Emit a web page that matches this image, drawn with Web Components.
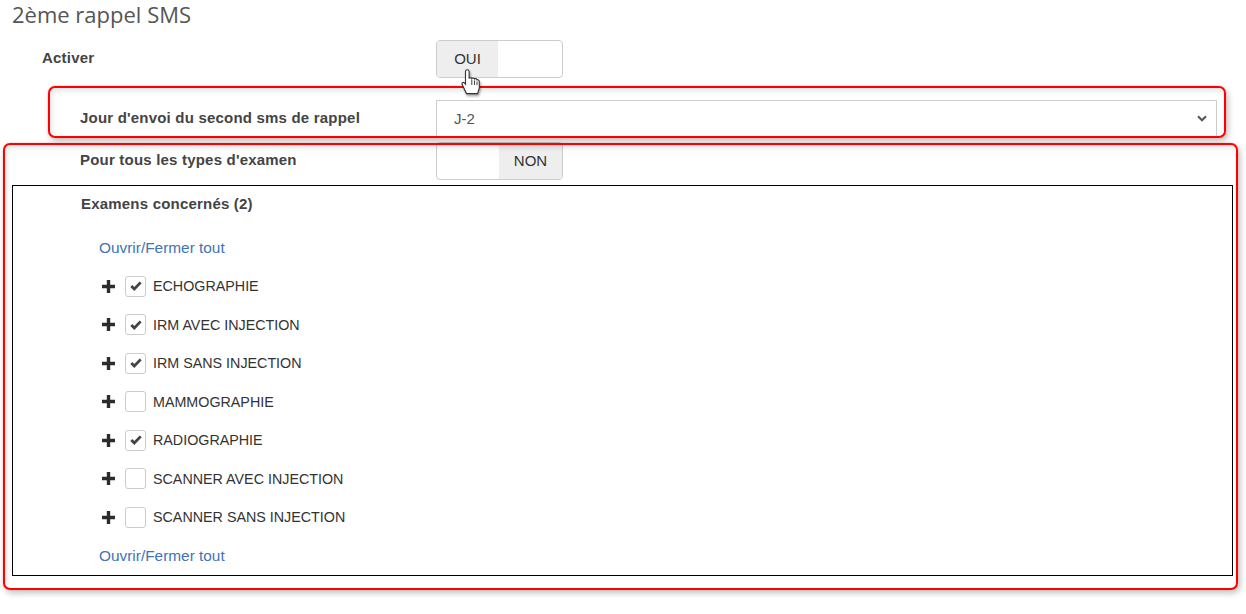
<!DOCTYPE html>
<html>
<head>
<meta charset="utf-8">
<title>2ème rappel SMS</title>
<style>
  html, body { margin: 0; padding: 0; background: #fff; }
  body { font-family: "Liberation Sans", Arial, sans-serif; color: #333; }
</style>
</head>
<body>
<template id="settings-row-tpl">
  <style>
    :host { display: flex; align-items: flex-start; height: var(--row-height, 38px); }
    .label {
      box-sizing: border-box;
      width: 436px;
      padding-left: var(--label-left, 80px);
      padding-top: var(--label-top, 9px);
      font: bold 15px/17px "Liberation Sans", Arial, sans-serif;
      letter-spacing: .2px;
      color: #444;
    }
    .control { flex: none; }
  </style>
  <div class="label"><slot name="label"></slot></div>
  <div class="control"><slot></slot></div>
</template>

<template id="on-off-tpl">
  <style>
    :host { display: block; width: 127px; height: 38px; }
    .box {
      box-sizing: border-box;
      display: flex;
      height: 100%;
      border: 1px solid #ccc;
      border-radius: 4px;
      overflow: hidden;
      font: 15px/36px "Liberation Sans", Arial, sans-serif;
      color: #333;
    }
    .on { justify-content: flex-start; }
    .off { justify-content: flex-end; }
    .state { width: 61px; background: #eee; text-align: center; }
    .off .state { width: 63px; }
  </style>
  <div class="box"><span class="state"></span></div>
</template>

<template id="day-select-tpl">
  <style>
    :host { display: block; width: 781px; height: 38px; }
    .box {
      box-sizing: border-box;
      height: 100%;
      display: flex;
      align-items: center;
      justify-content: space-between;
      padding: 0 9px 2px 17px;
      border: 1px solid #ccc;
      font: 15px "Liberation Sans", Arial, sans-serif;
      color: #555;
    }
    svg { display: block; }
  </style>
  <div class="box">
    <slot></slot>
    <svg width="10" height="7" viewBox="0 0 10 7"><path d="M1 1.300l4 4 4-4" fill="none" stroke="#555" stroke-width="2"/></svg>
  </div>
</template>

<template id="exam-item-tpl">
  <style>
    :host { display: flex; align-items: center; height: 38.5px; font: 14.3px "Liberation Sans", Arial, sans-serif; color: #333; }
    .plus { width: 13px; height: 13px; margin-right: 10px; flex: none; }
    .check {
      box-sizing: border-box;
      width: 21px; height: 21px;
      margin-right: 7px;
      border: 1px solid #ccc;
      border-radius: 3px;
      display: flex; align-items: center; justify-content: center;
      flex: none;
    }
    svg { display: block; }
    .mark { visibility: hidden; }
    :host([checked]) .mark { visibility: visible; }
  </style>
  <svg class="plus" viewBox="0 0 13 13"><path d="M4.800 0h3.400v4.800H13v3.400H8.200V13H4.800V8.200H0V4.800h4.800z" fill="#2c2c2c"/></svg>
  <span class="check">
    <svg class="mark" width="12" height="10" viewBox="0 0 12 10"><path d="M1.300 5l3 3 6.400-6.600" fill="none" stroke="#444" stroke-width="2.800"/></svg>
  </span>
  <slot></slot>
</template>

<template id="exam-box-tpl">
  <style>
    :host {
      display: block;
      box-sizing: border-box;
      margin-left: 12px;
      width: 1221px;
      height: 391px;
      border: 1px solid #000;
    }
    h3 {
      margin: 0;
      padding: 9px 0 0 68px;
      font: bold 15px/17px "Liberation Sans", Arial, sans-serif;
      letter-spacing: .2px;
      color: #444;
    }
    .toggle-all {
      display: block;
      padding-left: 86px;
      font: 15.4px/17px "Liberation Sans", Arial, sans-serif;
      color: #3f74b8;
      text-decoration: none;
    }
    .top { margin-top: 27px; margin-bottom: 11px; }
    .bottom { margin-top: 10px; }
    .items { padding-left: 89px; }
  </style>
  <h3><slot name="title"></slot></h3>
  <a class="toggle-all top" href="#">Ouvrir/Fermer tout</a>
  <div class="items"><slot></slot></div>
  <a class="toggle-all bottom" href="#">Ouvrir/Fermer tout</a>
</template>

<template id="red-frame-tpl">
  <style>
    :host {
      position: absolute;
      box-sizing: border-box;
      border: 2px solid #f00;
      border-radius: 7px;
      box-shadow: 0 0 1px #f66, 2px 3px 6px rgba(0,0,0,.25), inset 2px 3px 5px rgba(0,0,0,.1);
      pointer-events: none;
    }
  </style>
</template>

<template id="hand-cursor-tpl">
  <style>
    :host { position: absolute; left: 461px; top: 69px; width: 20px; height: 29px; }
    svg { display: block; filter: drop-shadow(1px 2px 1px rgba(0,0,0,.35)); }
  </style>
  <svg width="20" height="29" viewBox="0 0 20 29">
    <path d="M4.500 2.500a1.800 1.800 0 0 1 3.600 0v6.500l1.800-.3 1 .3v.5l.3-.5 1.700.2.500.8.300-.5 1.700.3.600 1.100.6-.3 1.300.7.400 1.600v6l-1.700 5.700H5.500L1.200 15.500c-.7-1.400.6-2.700 2-1.800l1.300 1.600z" fill="#fff" stroke="#333" stroke-width="1.100"/>
    <path d="M10.800 11v5M13.500 11.400v4.600M16 12.400v3.800" fill="none" stroke="#444" stroke-width="1"/>
  </svg>
</template>

<script>
function defineFromTemplate(tag, tplId, onConnect) {
  customElements.define(tag, class extends HTMLElement {
    constructor() {
      super();
      this.attachShadow({mode: 'open'});
      this.shadowRoot.appendChild(document.getElementById(tplId).content.cloneNode(true));
    }
    connectedCallback() {
      if(onConnect) {
        onConnect(this);
      }
    }
  });
}

defineFromTemplate('settings-row', 'settings-row-tpl');
defineFromTemplate('day-select', 'day-select-tpl');
defineFromTemplate('exam-item', 'exam-item-tpl');
defineFromTemplate('exam-box', 'exam-box-tpl');
defineFromTemplate('hand-cursor', 'hand-cursor-tpl');

defineFromTemplate('on-off', 'on-off-tpl', (el) => {
  let isOn = el.getAttribute('value') === 'on';
  let box = el.shadowRoot.querySelector('.box');
  box.classList.add(isOn ? 'on' : 'off');
  box.querySelector('.state').textContent = isOn ? 'OUI' : 'NON';
});

defineFromTemplate('red-frame', 'red-frame-tpl', (el) => {
  let [x, y, w, h] = el.getAttribute('rect').split(' ');
  el.style.left = x + 'px';
  el.style.top = y + 'px';
  el.style.width = w + 'px';
  el.style.height = h + 'px';
});

customElements.define('sms-page', class extends HTMLElement {
  constructor() {
    super();
    this.attachShadow({mode: 'open'});
    this.shadowRoot.innerHTML = `
      <style>
        :host { display: block; position: relative; height: 614px; overflow: hidden; }
        h2 {
          margin: 0;
          height: 40px;
          padding-left: 12px;
          font: 22px/28px "Open Sans", sans-serif;
          color: #555;
        }
      </style>
      <h2><slot name="title"></slot></h2>
      <slot></slot>
    `;
  }
});
</script>

<sms-page>
  <span slot="title">2ème rappel SMS</span>
  <settings-row style="--label-left:42px;margin-bottom:22px">
    <span slot="label">Activer</span>
    <on-off value="on"></on-off>
  </settings-row>
  <settings-row style="margin-bottom:4px">
    <span slot="label">Jour d'envoi du second sms de rappel</span>
    <day-select>J-2</day-select>
  </settings-row>
  <settings-row style="margin-bottom:5px">
    <span slot="label">Pour tous les types d'examen</span>
    <on-off value="off"></on-off>
  </settings-row>
  <exam-box>
    <span slot="title">Examens concernés (2)</span>
    <exam-item checked>ECHOGRAPHIE</exam-item>
    <exam-item checked>IRM AVEC INJECTION</exam-item>
    <exam-item checked>IRM SANS INJECTION</exam-item>
    <exam-item>MAMMOGRAPHIE</exam-item>
    <exam-item checked>RADIOGRAPHIE</exam-item>
    <exam-item>SCANNER AVEC INJECTION</exam-item>
    <exam-item>SCANNER SANS INJECTION</exam-item>
  </exam-box>
  <red-frame rect="48 86 1178 52"></red-frame>
  <red-frame rect="3 143 1235 447"></red-frame>
  <hand-cursor></hand-cursor>
</sms-page>
</body>
</html>
